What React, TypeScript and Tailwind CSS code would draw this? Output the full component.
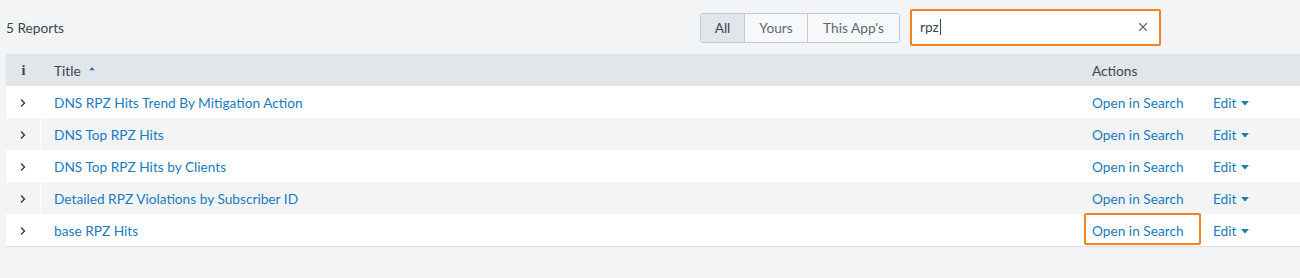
import { X } from "lucide-react";

const reports = [
  "DNS RPZ Hits Trend By Mitigation Action",
  "DNS Top RPZ Hits",
  "DNS Top RPZ Hits by Clients",
  "Detailed RPZ Violations by Subscriber ID",
  "base RPZ Hits",
];

function Chevron() {
  return (
    <svg width="8" height="10" viewBox="0 0 8 10" className="text-[#3c444d]">
      <path d="M2 1.5 L5.5 5 L2 8.5" fill="none" stroke="currentColor" strokeWidth="1.5" />
    </svg>
  );
}

function Caret({ up = false, w = 8 }: { up?: boolean; w?: number }) {
  return (
    <svg width={w} height={w * 0.6} viewBox="0 0 8 5" className={up ? "rotate-180" : ""}>
      <path d="M0 0 L8 0 L4 5 Z" fill="currentColor" />
    </svg>
  );
}

function ReportRow({ title, index }: { title: string; index: number }) {
  const striped = index % 2 === 1;
  const focused = index === reports.length - 1;
  return (
    <div className={`flex h-8 items-center ${striped ? "bg-[#f2f4f5]" : "bg-white"}`}>
      <div className="w-[35px] h-full flex items-center justify-center border-r border-white pt-[1px]">
        <Chevron />
      </div>
      <div className="flex-1 pl-[13px] pt-[2px] text-[#1a7bbd] truncate">{title}</div>
      <div className="w-[216px] flex items-center">
        <span
          className={`w-[117px] h-8 -mt-[2px] inline-flex items-center pl-[6px] border-2 rounded-[2px] text-[#1a7bbd] ${
            focused ? "border-[#f58220]" : "border-transparent"
          }`}
        >
          <span className="pt-[4px]">Open in Search</span>
        </span>
        <span className="ml-[12px] pt-[2px] inline-flex items-center gap-[5px] text-[#1a7bbd]">
          Edit
          <Caret />
        </span>
      </div>
    </div>
  );
}

export default function App() {
  return (
    <div
      className="w-[1300px] h-[278px] bg-[#f2f4f5] text-[13.7px] text-[#3c444d]"
      style={{ fontFamily: "Lato, 'Open Sans', sans-serif" }}
    >
      <div className="h-[54px] flex items-center pl-[6px]">
        <div className="w-[694px] pt-[3px]">5 Reports</div>
        <div className="flex h-[30px] border border-[#c3cbd4] rounded-[3px] overflow-hidden mt-[2px]">
          <div className="w-[43px] flex items-center justify-center bg-[#e1e6eb] text-[#3c444d]">All</div>
          <div className="w-[63px] flex items-center justify-center bg-[#f7f8fa] border-l border-[#c3cbd4] text-[#5c6773]">
            Yours
          </div>
          <div className="w-[92px] flex items-center justify-center bg-[#f7f8fa] border-l border-[#c3cbd4] text-[#5c6773]">
            This App's
          </div>
        </div>
        <div className="ml-[10px] w-[251px] h-[37px] border-2 border-[#f58220] rounded-[2px] bg-white flex items-center pl-[8px] pr-[9px]">
          <span className="text-[#3c444d]">rpz</span>
          <span className="w-px h-[16px] bg-[#3c444d] ml-px" />
          <X size={14} strokeWidth={2} className="ml-auto text-[#5c6773]" />
        </div>
      </div>
      <div className="ml-[6px] shadow-[0_1px_1px_rgba(0,0,0,0.08)]">
        <div className="flex h-8 items-center bg-[#e1e6eb]">
          <div
            className="w-[35px] flex items-center justify-center font-bold text-[14px] text-[#3c444d]"
            style={{ fontFamily: "'Liberation Serif', serif" }}
          >
            i
          </div>
          <div className="flex-1 pl-[13px] pt-[2px] flex items-center gap-[8px]">
            Title
            <span className="text-[#1a7bbd] -mt-[5px]">
              <Caret up w={6} />
            </span>
          </div>
          <div className="w-[216px] pl-[8px] pt-[2px]">Actions</div>
        </div>
        {reports.map((r, i) => (
          <ReportRow key={r} title={r} index={i} />
        ))}
      </div>
    </div>
  );
}
